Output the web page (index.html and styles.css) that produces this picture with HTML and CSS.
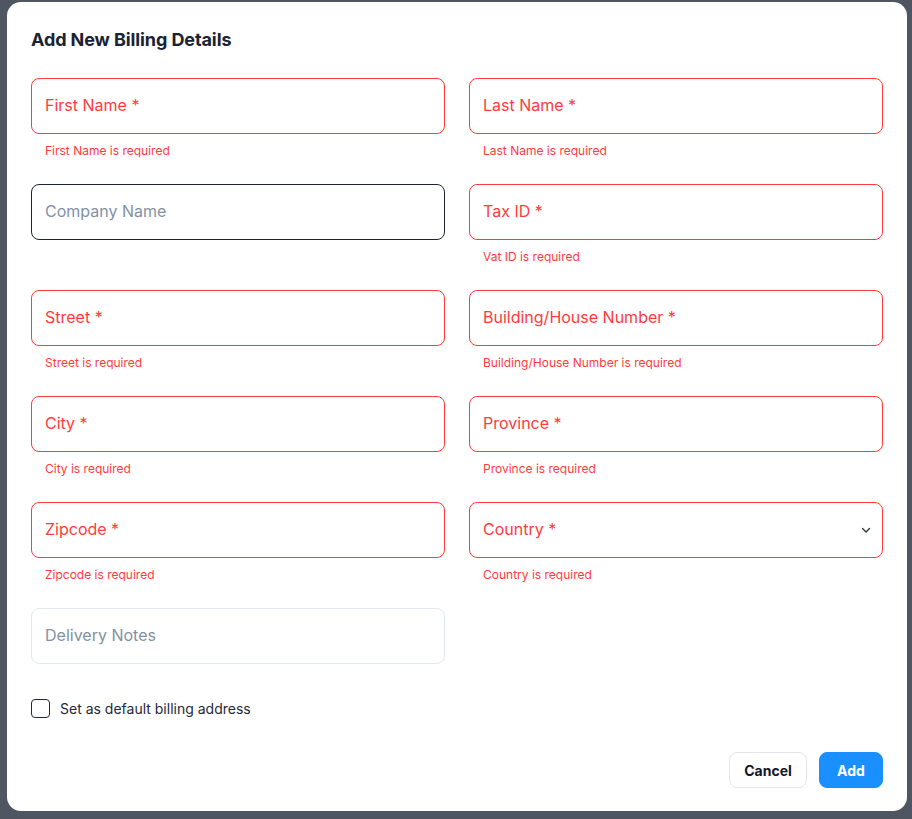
FILE: index.html
```html
<!DOCTYPE html>
<html lang="en">
<head>
<meta charset="utf-8">
<title>Add New Billing Details</title>
<link rel="stylesheet" href="styles.css">
</head>
<body>
<div class="overlay">
  <div class="modal">
    <h2 class="modal-title">Add New Billing Details</h2>
    <div class="form-grid">
      <div class="field">
        <div class="input error"><span>First Name *</span></div>
        <div class="helper">First Name is required</div>
      </div>
      <div class="field">
        <div class="input error"><span>Last Name *</span></div>
        <div class="helper">Last Name is required</div>
      </div>
      <div class="field">
        <div class="input focused placeholder"><span>Company Name</span></div>
      </div>
      <div class="field">
        <div class="input error"><span>Tax ID *</span></div>
        <div class="helper">Vat ID is required</div>
      </div>
      <div class="field">
        <div class="input error"><span>Street *</span></div>
        <div class="helper">Street is required</div>
      </div>
      <div class="field">
        <div class="input error"><span>Building/House Number *</span></div>
        <div class="helper">Building/House Number is required</div>
      </div>
      <div class="field">
        <div class="input error"><span>City *</span></div>
        <div class="helper">City is required</div>
      </div>
      <div class="field">
        <div class="input error"><span>Province *</span></div>
        <div class="helper">Province is required</div>
      </div>
      <div class="field">
        <div class="input error"><span>Zipcode *</span></div>
        <div class="helper">Zipcode is required</div>
      </div>
      <div class="field">
        <div class="input error select">
          <span>Country *</span>
          <svg class="chevron" width="12" height="12" viewBox="0 0 12 12"><path d="M2.5 4.5 L6 8 L9.5 4.5" fill="none" stroke="#2d3748" stroke-width="1.4" stroke-linecap="round" stroke-linejoin="round"/></svg>
        </div>
        <div class="helper">Country is required</div>
      </div>
      <div class="field last">
        <div class="input plain placeholder"><span>Delivery Notes</span></div>
      </div>
    </div>
    <label class="checkbox-row">
      <span class="checkbox"></span>
      <span class="checkbox-label">Set as default billing address</span>
    </label>
    <div class="actions">
      <button class="btn btn-cancel">Cancel</button>
      <button class="btn btn-add">Add</button>
    </div>
  </div>
</div>
</body>
</html>
```
FILE: styles.css
```css
* { box-sizing: border-box; }
html, body { margin: 0; padding: 0; }
body {
  font-family: "Inter", "Noto Sans", "Liberation Sans", sans-serif;
  width: 912px;
  height: 819px;
  overflow: hidden;
  background: #4f5561;
}
.overlay {
  width: 912px;
  height: 819px;
  background: #4f5561;
  display: flex;
  align-items: flex-start;
  justify-content: flex-start;
  padding: 2px 0 0 7px;
}
.modal {
  width: 900px;
  height: 809px;
  background: #ffffff;
  border-radius: 14px;
  padding: 24px 24px 23px 24px;
  display: flex;
  flex-direction: column;
}
.modal-title {
  margin: 0 0 24px 0;
  font-size: 18px;
  line-height: 28px;
  font-weight: 700;
  color: #1a2233;
  letter-spacing: -0.1px;
}
.form-grid {
  display: grid;
  grid-template-columns: 414px 414px;
  column-gap: 24px;
  row-gap: 25px;
}
.field {
  display: flex;
  flex-direction: column;
  min-height: 81px;
}
.field.last { min-height: 56px; }
.input {
  height: 56px;
  border-radius: 8px;
  border: 1px solid #d9dee6;
  padding: 0 13px;
  display: flex;
  align-items: center;
  font-size: 16px;
  line-height: 20px;
  color: #1a2233;
}
.input > span { padding-bottom: 2px; }
.input.error {
  border-color: #ff3b3b;
  color: #ff3b3b;
}
.input.focused {
  border-color: #1c2433;
}
.input.plain {
  border-color: #e3e7ee;
}
.input.placeholder {
  color: #8391a5;
}
.input.select {
  justify-content: space-between;
  padding-right: 10px;
}
.chevron { display: block; }
.helper {
  margin-top: 9px;
  padding-left: 14px;
  font-size: 12px;
  line-height: 16px;
  color: #ff3b3b;
}
.checkbox-row {
  display: flex;
  align-items: center;
  gap: 10px;
  margin-top: 35px;
  height: 18px;
}
.checkbox {
  width: 19px;
  height: 19px;
  border: 1.5px solid #1e293b;
  border-radius: 4px;
  background: #fff;
}
.checkbox-label {
  font-size: 14px;
  color: #1f2937;
}
.actions {
  margin-top: auto;
  display: flex;
  justify-content: flex-end;
  gap: 12px;
}
.btn {
  height: 36px;
  border-radius: 8px;
  font-family: inherit;
  font-size: 14px;
  font-weight: 700;
  cursor: pointer;
}
.btn-cancel {
  width: 78px;
  background: #fff;
  border: 1px solid #e2e6ec;
  color: #111827;
}
.btn-add {
  width: 64px;
  background: #1a8fff;
  border: 1px solid #1a8fff;
  color: #fff;
}
```
